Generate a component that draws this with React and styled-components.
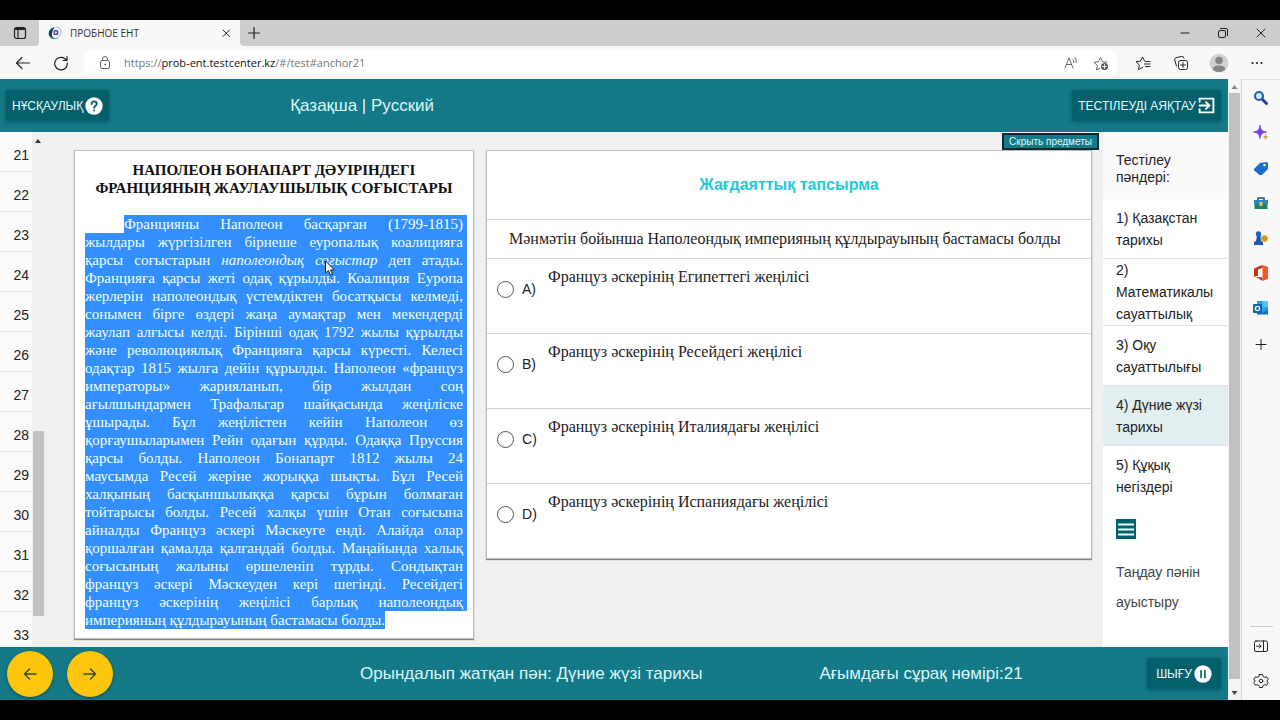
import React from "react";
import styled, { createGlobalStyle } from "styled-components";

const Global = createGlobalStyle`
  * { box-sizing: border-box; }
  body { margin: 0; background: #000; font-family: "Liberation Sans", sans-serif; color: #222; }
  button { font: inherit; border: 0; padding: 0; background: none; color: inherit; cursor: pointer; }
  a { color: inherit; text-decoration: none; }
  h1, h2, p, ul { margin: 0; padding: 0; list-style: none; }
  svg { display: block; flex: none; }
`;

const teal = "#147a87";
const darkTeal = "#02606d";
const ui = `"Open Sans", "Noto Sans", sans-serif`;

const Screen = styled.div`
  height: 100vh;
  padding: 20px 0;
  display: flex;
  flex-direction: column;
`;
const TabStrip = styled.div`
  display: flex;
  height: 26px;
  flex: none;
  background: #f8f8f8;
`;
const StripPart = styled.div`
  display: flex;
  align-items: center;
  flex: ${(p) => (p.$grow ? 1 : "none")};
  background: #cdcdcd;
  border-radius: ${(p) => (p.$grow ? "0 0 0 4px" : "0 0 4px 0")};
  padding-left: ${(p) => (p.$grow ? 6 : 12)}px;
  width: ${(p) => (p.$grow ? "auto" : "39px")};
`;
const Tab = styled.div`
  display: flex;
  align-items: center;
  width: 201px;
  padding: 0 6px 0 9px;
  gap: 8px;
  font-family: ${ui};
  font-size: 10px;
  color: #333;
  span { flex: 1; }
`;
const WindowButtons = styled.div`
  display: flex;
  gap: 22px;
  margin-left: auto;
  padding-right: 11px;
`;
const IconButton = styled.button`
  display: flex;
  align-items: center;
  justify-content: center;
  width: 16px;
  height: 16px;
`;
const Toolbar = styled.div`
  display: flex;
  align-items: center;
  flex: none;
  height: 33px;
  padding: 0 15px;
  gap: 22px;
  background: #f8f8f8;
`;
const AddressBar = styled.div`
  display: flex;
  align-items: center;
  flex: 1;
  height: 26px;
  margin: 0 -4px 0 -7px;
  padding: 0 8px 0 13px;
  gap: 11px;
  border-radius: 8px;
  background: #fff;
`;
const Address = styled.div`
  flex: 1;
  font-family: ${ui};
  font-size: 11px;
  line-height: 18px;
  color: #777;
  b { font-weight: 400; color: #111; }
`;
const AddressTools = styled.div`
  display: flex;
  gap: 14px;
`;
const Window = styled.div`
  display: flex;
  flex: 1;
  min-height: 0;
`;
const Page = styled.div`
  display: flex;
  flex-direction: column;
  flex: 1;
  min-width: 0;
  background: #f0f0f0;
`;
const PageScroll = styled.div`
  display: flex;
  flex-direction: column;
  align-items: center;
  width: 13px;
  padding: 6px 1px 5px;
  gap: 4px;
  background: #f4f4f4;
`;
const Thumb = styled.div`
  width: 11px;
  flex: ${(p) => (p.$height ? "none" : 1)};
  height: ${(p) => (p.$height ? p.$height + "px" : "auto")};
  margin-bottom: ${(p) => (p.$height ? 0 : 8)}px;
  background: #c1c1c1;
`;
const Arrow = styled.i`
  flex: none;
  width: 6px;
  height: 4px;
  background: ${(p) => p.$color};
  clip-path: ${(p) => (p.$down ? "polygon(0 0, 100% 0, 50% 100%)" : "polygon(50% 0, 100% 100%, 0 100%)")};
`;
const Rail = styled.nav`
  display: flex;
  flex-direction: column;
  align-items: center;
  width: 39px;
  padding: 10px 0 11px;
  gap: 19px;
  border-left: 1px solid #d8d8d8;
  border-top: 1px solid #e2e2e2;
  background: #f8f8f8;
`;
const RailFoot = styled.div`
  display: flex;
  flex-direction: column;
  align-items: center;
  gap: 19px;
  width: 23px;
  margin-top: auto;
  padding-top: 11px;
  border-top: 1px solid #ccc;
`;
const Bar = styled.div`
  display: flex;
  align-items: center;
  flex: none;
  height: 53px;
  padding: 0 7px 0 6px;
  background: ${teal};
  color: #def8fb;
  font-size: 17px;
  line-height: 20px;
`;
const Spacer = styled.div`
  flex: none;
  width: ${(p) => p.$w}px;
`;
const DarkButton = styled.button`
  display: flex;
  align-items: center;
  justify-content: center;
  height: 31px;
  padding: 0 6px;
  gap: 2px;
  margin-left: ${(p) => (p.$end ? "auto" : 0)};
  min-width: 74px;
  border-radius: 2px;
  background: ${darkTeal};
  box-shadow: 0 1px 4px rgba(0, 50, 60, 0.5);
  color: #e8fcff;
  font-size: 12px;
`;
const RoundButton = styled.button`
  display: flex;
  align-items: center;
  justify-content: center;
  width: 46px;
  height: 46px;
  margin: 0 13px 0 1px;
  border-radius: 50%;
  background: #ffc60d;
  box-shadow: 0 1px 3px rgba(0, 30, 40, 0.5);
`;
const Middle = styled.div`
  display: flex;
  flex: 1;
  min-height: 0;
`;
const Numbers = styled.ul`
  width: 32px;
  flex: none;
  overflow: hidden;
  background: #fbfbfb;
  li {
    height: 40px;
    padding: 15px 3px 0 0;
    border-bottom: 1px solid #e4e4e4;
    font-size: 14px;
    line-height: 16px;
    text-align: right;
  }
`;
const NumberScroll = styled.div`
  display: flex;
  flex-direction: column;
  justify-content: space-between;
  align-items: center;
  flex: none;
  width: 12px;
  padding: 7px 0 31px;
`;
const Main = styled.main`
  flex: 1;
  min-width: 0;
  padding: 1px 4px 0 31px;
`;
const HideButton = styled.button`
  display: block;
  height: 17px;
  margin: 0 0 1px auto;
  padding: 0 5px;
  border: 2px solid #062c30;
  background: ${teal};
  color: #dffbff;
  font-size: 10px;
  line-height: 13px;
`;
const Cards = styled.div`
  display: grid;
  grid-template-columns: 398px 1fr;
  align-items: start;
  gap: 14px;
  padding-right: 8px;
`;
const Card = styled.section`
  background: #fff;
  box-shadow: 0 0 0 1px #bbb, 0 1px 1px 1px #888;
`;
const Passage = styled(Card)`
  padding: 10px 6px 9px 10px;
  font-family: "Liberation Serif", serif;
  font-size: 15px;
  line-height: 18px;
  h2 {
    margin: 0 4px 18px 0;
    font-size: 15px;
    line-height: 18px;
    text-align: center;
    color: #111;
    white-space: nowrap;
  }
`;
const Line = styled.span`
  display: block;
  width: ${(p) => (p.$last ? "fit-content" : "auto")};
  margin-left: ${(p) => (p.$first ? 39 : 0)}px;
  padding-right: ${(p) => (p.$last ? 0 : 4)}px;
  background: #338fff;
  color: #f2feff;
  text-align: justify;
  text-align-last: ${(p) => (p.$last ? "left" : "justify")};
  white-space: nowrap;
`;
const Question = styled(Card)`
  h2 {
    height: 69px;
    font-size: 16px;
    line-height: 68px;
    text-align: center;
    color: #22c9da;
    border-bottom: 1px solid #d4d4d4;
  }
  p {
    height: 38px;
    padding: 0 22px;
    font-family: "Liberation Serif", serif;
    font-size: 16px;
    line-height: 38px;
  }
`;
const Option = styled.label`
  display: flex;
  align-items: flex-start;
  height: 75px;
  padding: 22px 10px 0;
  border-top: 1px solid #d4d4d4;
  input {
    appearance: none;
    width: 17px;
    height: 17px;
    margin: 0 8px 0 0;
    border: 1px solid #555;
    border-radius: 50%;
  }
  b {
    width: 26px;
    font-weight: 400;
    font-size: 14px;
    line-height: 16px;
  }
  span {
    margin-top: -13px;
    font-family: "Liberation Serif", serif;
    font-size: 16px;
    line-height: 18px;
  }
`;
const Subjects = styled.aside`
  width: 125px;
  flex: none;
  background: #fff;
  font-size: 14px;
  line-height: 22px;
  h2 {
    height: 67px;
    padding: 20px 40px 0 13px;
    background: #fafafa;
    font-size: 14px;
    font-weight: 400;
    line-height: 17px;
  }
`;
const Subject = styled.a`
  display: flex;
  align-items: center;
  min-height: 60px;
  padding: 0 13px;
  border-bottom: 1px solid ${(p) => (p.$last ? "transparent" : "#e2e2e2")};
  background: ${(p) => (p.$active ? "#e1eff1" : "transparent")};
`;
const MenuButton = styled.button`
  display: flex;
  margin: 13px 13px 18px;
`;
const Change = styled.a`
  display: block;
  padding: 0 13px;
  line-height: 30px;
  color: #444;
`;
const Cursor = styled.svg`
  position: absolute;
  left: 324px;
  top: 260px;
`;

const Svg = ({ s = 16, w = 1, c = "#222", children, fill = "none" }) => (
  <svg width={s} height={s} viewBox="0 0 16 16" fill={fill} stroke={c} strokeWidth={w} strokeLinecap="round" strokeLinejoin="round" aria-hidden="true">
    {children}
  </svg>
);

const Favicon = () => (
  <Svg s={14} c="none">
    <path d="M8 1C3 2 0 6 1 10c1 4 5 6 8 4.500-3-.5-5-2.500-4.500-5.500C4.800 6 6 3 8 1z" fill="#123c5c" />
    <path d="M3 12c2 2.500 5 3 7.500 2" stroke="#2ea78a" strokeWidth="1" />
    <path d="M10 1c4 1 6 5 4 9-1 2-2 3-4 4" stroke="#9ba3b5" strokeWidth="1" strokeDasharray="2 1" />
    <rect x="7" y="5.500" width="4" height="4" rx="1" stroke="#3a45c8" strokeWidth="1.600" />
  </Svg>
);

const railIcons = [
  ["Поиск", <Svg key="i" c="none"><circle cx="6" cy="6" r="4" fill="#d8ecff" stroke="#1e5fc0" strokeWidth="2.200" /><path d="M9.500 9.500l4 4" stroke="#213f9e" strokeWidth="3" /></Svg>],
  ["Обнаружение", <Svg key="i" c="none"><path d="M7 .5c.8 4.500 2 5.700 6.500 6.500C9 7.800 7.800 9 7 13.500 6.200 9 5 7.800.5 7 5 6.200 6.200 5 7 .5z" fill="#7340d8" stroke="#7340d8" strokeWidth=".8" /><path d="M12.500 9c.4 2 1 2.500 3 3-2 .5-2.600 1-3 3-.4-2-1-2.500-3-3 2-.5 2.600-1 3-3z" fill="#d9a928" /></Svg>],
  ["Покупки", <Svg key="i" c="none"><path d="M1 9l6-6 6-1 2 1v6l-6 6H7L1 10z" fill="#1670cb" /><path d="M1 9l6 5v1L1 10z" fill="#104aa0" /><circle cx="11.500" cy="5" r="1.300" fill="#f5e9bd" /></Svg>],
  ["Инструменты", <Svg key="i" c="none"><path d="M5 6V3h6v3" stroke="#18517e" strokeWidth="1.500" /><rect x="1" y="5" width="14" height="4" fill="#2b86c5" /><rect x="1.500" y="9" width="13" height="5" fill="#188267" /><rect x="6.500" y="7" width="3" height="4" fill="#f0ca48" /></Svg>],
  ["Игры", <Svg key="i" c="none"><circle cx="5.500" cy="4" r="2.700" fill="#1c64c4" /><path d="M4 6h3.500l.5 5 2 1v3H1v-3l2-1z" fill="#1b57b4" /><circle cx="11.500" cy="8.500" r="3.600" fill="#e5b33b" /><circle cx="11.500" cy="8.500" r="1.600" stroke="#a76b18" strokeWidth=".8" /></Svg>],
  ["Office", <Svg key="i" c="none"><path d="M9.500 0L3 2.500 1 4v8l4-1.500v-6L9.500 3v9.500L3 12l6.500 4z" fill="#c93410" /><path d="M9.500 0L15 2v12l-5.500 2z" fill="#ef5a25" /></Svg>],
  ["Outlook", <Svg key="i" c="none"><path d="M4 1h11v13H4z" fill="#2d9fe8" /><path d="M9.500 1H15v6H9.500z" fill="#55c6f5" /><path d="M4 10l5.500 3L15 9v5.500H4z" fill="#1470be" /><rect x="0" y="4" width="9" height="9" rx="1" fill="#0766b5" /><circle cx="4.500" cy="8.500" r="2.100" stroke="#fff" strokeWidth="1.400" /></Svg>],
  ["Добавить", <Svg key="i"><path d="M8 4.500v10M3 9.500h10" /></Svg>],
];

const lines = [
  "Францияны Наполеон басқарған (1799-1815)",
  "жылдары жүргізілген бірнеше еуропалық коалицияға",
  <>қарсы соғыстарын <i>наполеондық соғыстар</i> деп атады.</>,
  "Францияға қарсы жеті одақ құрылды. Коалиция Еуропа",
  "жерлерін наполеондық үстемдіктен босатқысы келмеді,",
  "сонымен бірге өздері жаңа аумақтар мен мекендерді",
  "жаулап алғысы келді. Бірінші одақ 1792 жылы құрылды",
  "және революциялық Францияға қарсы күресті. Келесі",
  "одақтар 1815 жылға дейін құрылды. Наполеон «француз",
  "императоры» жарияланып, бір жылдан соң",
  "ағылшындармен Трафальгар шайқасында жеңіліске",
  "ұшырады. Бұл жеңілістен кейін Наполеон өз",
  "қорғаушыларымен Рейн одағын құрды. Одаққа Пруссия",
  "қарсы болды. Наполеон Бонапарт 1812 жылы 24",
  "маусымда Ресей жеріне жорыққа шықты. Бұл Ресей",
  "халқының басқыншылыққа қарсы бұрын болмаған",
  "тойтарысы болды. Ресей халқы үшін Отан соғысына",
  "айналды Француз әскері Мәскеуге енді. Алайда олар",
  "қоршалған қамалда қалғандай болды. Маңайында халық",
  "соғысының жалыны өршеленіп тұрды. Сондықтан",
  "француз әскері Мәскеуден кері шегінді. Ресейдегі",
  "француз әскерінің жеңілісі барлық наполеондық",
  "империяның құлдырауының бастамасы болды.",
];
const options = [
  ["A", "Француз әскерінің Египеттегі жеңілісі"],
  ["B", "Француз әскерінің Ресейдегі жеңілісі"],
  ["C", "Француз әскерінің Италиядағы жеңілісі"],
  ["D", "Француз әскерінің Испаниядағы жеңілісі"],
];
const subjects = [
  "1) Қазақстан тарихы",
  "2) Математикалы сауаттылық",
  "3) Оқу сауаттылығы",
  "4) Дүние жүзі тарихы",
  "5) Құқық негіздері",
];

export default function App() {
  return (
    <Screen>
      <Global />
      <TabStrip>
        <StripPart>
          <IconButton aria-label="Вкладки">
            <Svg w={1.2}><rect x="2.500" y="2.500" width="11" height="11" rx="2" /><path d="M3.500 4h9" strokeWidth="2" /><path d="M6 5v8" /></Svg>
          </IconButton>
        </StripPart>
        <Tab>
          <Favicon />
          <span>ПРОБНОЕ ЕНТ</span>
          <IconButton aria-label="Закрыть вкладку"><Svg><path d="M5 5l6.500 6.500M11.500 5L5 11.500" /></Svg></IconButton>
        </Tab>
        <StripPart $grow>
          <IconButton aria-label="Новая вкладка"><Svg w={1.2}><path d="M8 2.500v11M2.500 8h11" /></Svg></IconButton>
          <WindowButtons>
            <IconButton aria-label="Свернуть"><Svg><path d="M4 8h8" /></Svg></IconButton>
            <IconButton aria-label="Развернуть"><Svg><rect x="3.500" y="5.500" width="7" height="7" rx="1.500" /><path d="M5.500 3.500H11a1.500 1.500 0 0 1 1.500 1.500v5.500" /></Svg></IconButton>
            <IconButton aria-label="Закрыть"><Svg><path d="M4 4l8 8M12 4l-8 8" /></Svg></IconButton>
          </WindowButtons>
        </StripPart>
      </TabStrip>
      <Toolbar>
        <IconButton aria-label="Назад"><Svg w={1.2}><path d="M14.500 8h-13M7 2.500L1.500 8 7 13.500" /></Svg></IconButton>
        <IconButton aria-label="Обновить"><Svg w={1.2}><path d="M13.500 5.500A6.300 6.300 0 1 0 14.300 8M14 1.500v4h-4" /></Svg></IconButton>
        <AddressBar>
          <Svg c="#666"><rect x="3.500" y="5.500" width="9" height="8" rx="1.500" /><path d="M5.500 5.500V4a2.500 2.500 0 0 1 5 0v1.500" /><circle cx="8" cy="9.500" r=".5" /></Svg>
          <Address role="textbox" aria-label="Адрес" contentEditable suppressContentEditableWarning spellCheck={false}>
            https://<b>prob-ent.testcenter.kz</b>/#/test#anchor21
          </Address>
          <AddressTools>
            <IconButton aria-label="Прочесть вслух"><Svg c="#666"><path d="M2 13L6 3l4 10M3.500 9.500h5M10 4.500a3 3 0 0 1 .8 3M12 2.500a6 6 0 0 1 1.200 5" /></Svg></IconButton>
            <IconButton aria-label="В избранное"><Svg c="#666"><path d="M7 13l-3.500 2 .8-4.500L1 7.300l4.500-.6L7.500 2.500l2 4.200 4.500.6" /><circle cx="11.500" cy="11.500" r="3.500" fill="#555" stroke="none" /><path d="M11.500 9.700v3.600M9.700 11.500h3.600" stroke="#fff" /></Svg></IconButton>
          </AddressTools>
        </AddressBar>
        <IconButton aria-label="Избранное"><Svg><path d="M9.500 6L7.500 2 5.500 6 1 6.700l3.300 3.200-.8 4.600 4-2.200M10.500 6.500H15M9.500 9H15M10.500 11.500H15" /></Svg></IconButton>
        <IconButton aria-label="Коллекции"><Svg><rect x="5.500" y="5.500" width="9" height="9" rx="2" /><path d="M3.500 11L1.700 5A2 2 0 0 1 3 2.700l5.500-1.200A2 2 0 0 1 11 3M10 7.500v5M7.500 10h5" /></Svg></IconButton>
        <IconButton aria-label="Профиль"><Svg s={20} c="none"><circle cx="8" cy="8" r="7.500" fill="#d0d0d0" /><circle cx="8" cy="6" r="3" fill="#858585" /><path d="M3 13c0-4 10-4 10 0-2 3-8 3-10 0z" fill="#858585" /></Svg></IconButton>
        <IconButton aria-label="Меню"><Svg c="none" fill="#222"><circle cx="3.500" cy="8" r="1.100" /><circle cx="8" cy="8" r="1.100" /><circle cx="12.500" cy="8" r="1.100" /></Svg></IconButton>
      </Toolbar>
      <Window>
        <Page>
          <Bar as="header">
            <DarkButton>
              НҰСҚАУЛЫҚ
              <Svg s={18} c="none"><circle cx="8" cy="8" r="7.700" fill="#fff" /><path d="M5.800 6.300C5.800 3 10.500 3.200 10.500 6c0 1.700-2.400 1.800-2.400 3.700M8.100 11.800v.2" stroke={darkTeal} strokeWidth="1.600" /></Svg>
            </DarkButton>
            <Spacer $w={181} />
            <div><a href="#kz">Қазақша</a> | <a href="#ru">Русский</a></div>
            <DarkButton $end>
              ТЕСТІЛЕУДІ АЯҚТАУ
              <Svg s={17} c="#fff" w={1.800}><path d="M1.500 4.500v-3h13v13h-13v-3M1.500 8h9M7.500 4.800L10.700 8l-3.200 3.200" /></Svg>
            </DarkButton>
          </Bar>
          <Middle>
            <Numbers>
              {Array.from({ length: 13 }, (_, i) => <li key={i}><a href={`#anchor${21 + i}`}>{21 + i}</a></li>)}
            </Numbers>
            <NumberScroll><Arrow $color="#333" /><Thumb $height={185} /></NumberScroll>
            <Main>
              <HideButton>Скрыть предметы</HideButton>
              <Cards>
                <Passage>
                  <h2>НАПОЛЕОН БОНАПАРТ ДӘУІРІНДЕГІ<br />ФРАНЦИЯНЫҢ ЖАУЛАУШЫЛЫҚ СОҒЫСТАРЫ</h2>
                  <p>
                    {lines.map((t, i) => <Line key={i} $first={i === 0} $last={i === lines.length - 1}>{t}</Line>)}
                  </p>
                </Passage>
                <Question>
                  <h2>Жағдаяттық тапсырма</h2>
                  <p>Мәнмәтін бойынша Наполеондық империяның құлдырауының бастамасы болды</p>
                  {options.map(([k, t]) => (
                    <Option key={k}><input type="radio" name="answer" /><b>{k})</b><span>{t}</span></Option>
                  ))}
                </Question>
              </Cards>
            </Main>
            <Subjects>
              <h2>Тестілеу пәндері:</h2>
              {subjects.map((s, i) => <Subject key={s} href={`#subject${i + 1}`} $active={i === 3} $last={i === 4}>{s}</Subject>)}
              <MenuButton aria-label="Меню предметов">
                <svg width="20" height="20"><path d="M0 0h20v20H0z" fill={darkTeal} /><path d="M2 5.500h16M2 10.500h16M2 15.500h16" stroke="#e8ffff" strokeWidth="2" /></svg>
              </MenuButton>
              <Change href="#change">Таңдау пәнін ауыстыру</Change>
            </Subjects>
          </Middle>
          <Bar as="footer">
            <RoundButton aria-label="Предыдущий вопрос"><Svg c="#30522a" w={1.500}><path d="M14 8H2.500M7.500 3l-5 5 5 5" /></Svg></RoundButton>
            <RoundButton aria-label="Следующий вопрос"><Svg c="#30522a" w={1.500}><path d="M2 8h11.500M8.500 3l5 5-5 5" /></Svg></RoundButton>
            <Spacer $w={234} />
            <span>Орындалып жатқан пән: Дүние жүзі тарихы</span>
            <Spacer $w={117} />
            <span>Ағымдағы сұрақ нөмірі:21</span>
            <DarkButton $end>
              ШЫҒУ
              <Svg s={18} c="none"><circle cx="8" cy="8" r="7.700" fill="#fff" /><path d="M6.300 5v6M9.700 5v6" stroke={darkTeal} strokeWidth="1.500" /></Svg>
            </DarkButton>
          </Bar>
        </Page>
        <PageScroll><Arrow $color="#888" /><Thumb /><Arrow $down $color="#444" /></PageScroll>
        <Rail>
          {railIcons.map(([label, icon]) => <IconButton key={label} aria-label={label}>{icon}</IconButton>)}
          <RailFoot>
            <IconButton aria-label="Боковая панель"><Svg><rect x="1.500" y="3" width="13" height="10.500" rx="1.500" /><path d="M10.500 3v10M3.500 8.200h4.500M6.300 6.500L8 8.200 6.300 10" /></Svg></IconButton>
            <IconButton aria-label="Настройки"><Svg><circle cx="8" cy="8" r="1.800" /><path d="M6.500 1.500h3l.6 2 1.500.8 2.100-.5 1.500 2.600L13.800 8l1.400 1.600-1.500 2.600-2.100-.5-1.500.8-.6 2h-3l-.6-2-1.500-.8-2.100.5L.8 9.600 2.200 8 .8 6.400l1.500-2.600 2.100.5 1.500-.8z" /></Svg></IconButton>
          </RailFoot>
        </Rail>
      </Window>
      <Cursor width="11" height="16" viewBox="0 0 11 16" aria-hidden="true"><path d="M1.500 1v12l3-2.500 2 4.500 2-1-2-4h4z" fill="#fff" stroke="#222" /></Cursor>
    </Screen>
  );
}
